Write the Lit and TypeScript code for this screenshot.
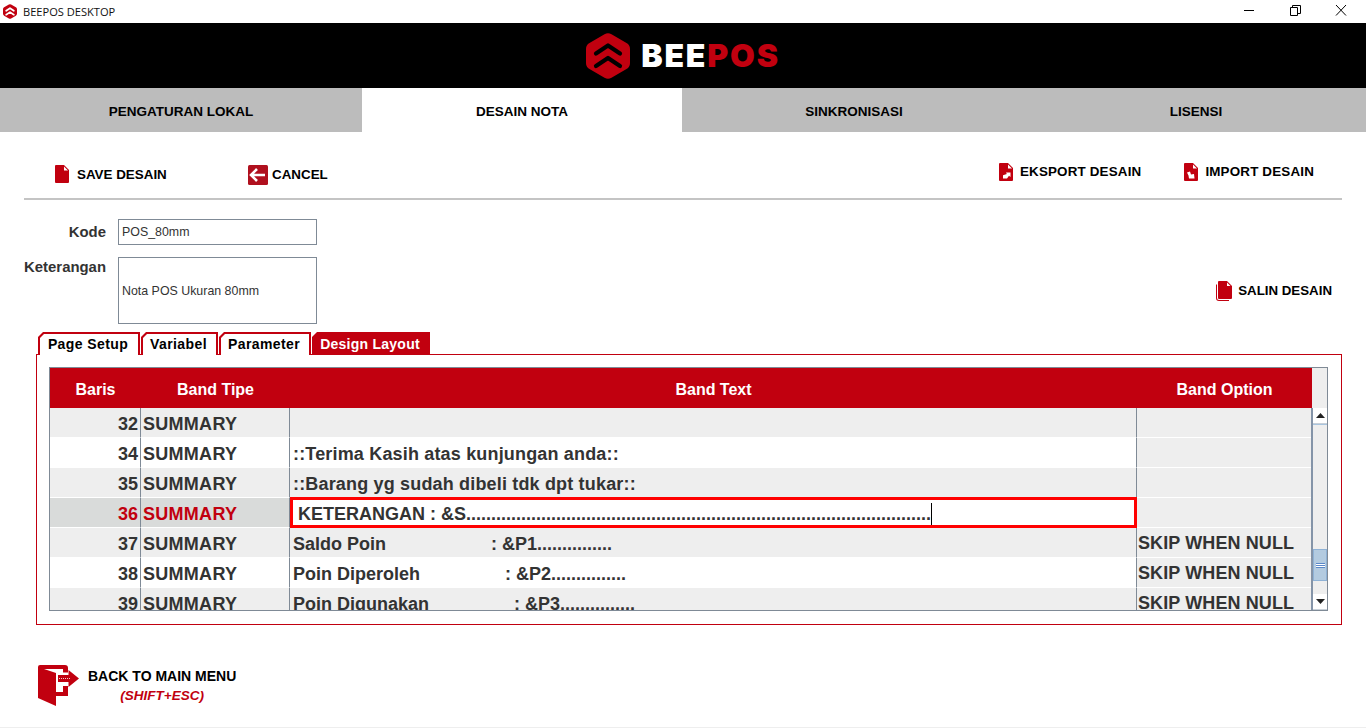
import { LitElement, html, css, svg } from "lit";
import { customElement } from "lit/decorators.js";

const RED = "#c1000f";
const REDC = css`#c1000f`;
const HEX = "M18.500 1.200a7 7 0 0 1 7 0L40.500 10a7 7 0 0 1 3.500 6V30a7 7 0 0 1-3.500 6L25.500 44.800a7 7 0 0 1-7 0L3.500 36A7 7 0 0 1 0 30V16A7 7 0 0 1 3.500 10Z";
const doc = (inner = svg``) => html`<svg class="ic" width="14" height="18" viewBox="0 0 14 18"><path fill="${RED}" d="M1 0H9L14 5V17a1 1 0 0 1-1 1H1a1 1 0 0 1-1-1V1a1 1 0 0 1 1-1Z"/><path fill="#fff" d="M9 1.500 13 5.500H9Z"/>${inner}</svg>`;
const hex = (w: number, h: number, stroke: string, sw: number) => html`<svg width="${w}" height="${h}" viewBox="0 0 44 46"><path fill="${RED}" d="${HEX}"/><path fill="none" stroke="${stroke}" stroke-width="${sw}" stroke-linejoin="round" stroke-linecap="round" d="M10 20.500 22 12.500 34 20.500"/><path fill="none" stroke="${stroke}" stroke-width="${sw}" stroke-linejoin="round" stroke-linecap="round" d="M10 33 22 25 34 33"/></svg>`;

const rows = [
  ["32", "", "", false],
  ["34", "::Terima Kasih atas kunjungan anda::", "", false],
  ["35", "::Barang yg sudah dibeli tdk dpt tukar::", "", false],
  ["36", "KETERANGAN : &S" + ".".repeat(93), "", true],
  ["37", "Saldo Poin" + " ".repeat(21) + ": &P1" + ".".repeat(15), "SKIP WHEN NULL", false],
  ["38", "Poin Diperoleh" + " ".repeat(17) + ": &P2" + ".".repeat(15), "SKIP WHEN NULL", false],
  ["39", "Poin Digunakan" + " ".repeat(17) + ": &P3" + ".".repeat(15), "SKIP WHEN NULL", false],
] as [string, string, string, boolean][];

@customElement("app-root")
export class AppRoot extends LitElement {
  static styles = css`
    :host { display: block; width: 1366px; height: 728px; overflow: hidden; background: #fff; font-family: "Liberation Sans", Arial, sans-serif; color: #000; box-sizing: border-box; border-bottom: 1px solid #eee; }
    * { box-sizing: border-box; }
    .titlebar { height: 23px; display: flex; align-items: center; padding-left: 3px; }
    .titlebar .name { font: 11.100px "Open Sans", sans-serif; margin-left: 6px; color: #111; }
    .win { margin-left: auto; margin-right: 2px; display: flex; }
    .win svg { display: block; width: 46px; height: 23px; }
    .banner { height: 65px; background: #000; display: flex; align-items: center; justify-content: center; gap: 11px; padding-top: 1px; }
    .brand { font: 900 32px/1 Inter, "Liberation Sans", sans-serif; letter-spacing: 1.800px; color: #fff; }
    .brand b { color: ${REDC}; font-weight: 900; }
    .nav { display: grid; grid-template-columns: 362px 320px 344px 340px; height: 44px; background: #bcbcbc; }
    .nav div { display: flex; align-items: center; justify-content: center; font-size: 13.500px; font-weight: 700; padding-top: 2px; }
    .nav .on { background: #fff; }
    .toolbar { height: 68px; margin: 0 24px; border-bottom: 2px solid #c4c4c4; display: flex; align-items: center; padding: 18px 28px 0 31px; }
    .tb { display: flex; align-items: center; font-size: 13.400px; font-weight: 700; }
    .save { gap: 8px; width: 193px; }
    .cancel { gap: 4px; margin-top: 1px; }
    .right { margin-left: auto; display: flex; gap: 43px; margin-top: -5px; }
    .right .tb { gap: 7px; letter-spacing: 0.170px; }
    .ic { display: block; }
    .form { padding-top: 19px; display: grid; grid-template-columns: 82px 199px 1fr; column-gap: 12px; row-gap: 12px; margin-left: 24px; }
    label { font-size: 14.900px; font-weight: 700; color: #333; text-align: right; white-space: nowrap; }
    .l1 { padding-top: 5px; }
    .l2 { padding-top: 2px; }
    .field { border: 1px solid #7f8a96; font-size: 12.400px; color: #333; padding-left: 3px; display: flex; align-items: center; }
    .f1 { height: 26px; }
    .f2 { height: 67px; }
    .salin { justify-self: end; align-self: center; gap: 6px; margin-right: 34px; font-size: 13.300px; }
    .tabs { display: grid; grid-template-columns: 102px 77px 92px 118px; gap: 1px; margin: 8px 0 0 38px; height: 23px; position: relative; z-index: 1; }
    .tab { background: ${REDC}; padding: 2px 2px 0; clip-path: polygon(5px 0, 100% 0, 100% 100%, 0 100%, 0 5px); font-size: 14px; font-weight: 700; letter-spacing: 0.400px; }
    .tab span { display: flex; align-items: center; justify-content: center; height: 100%; background: #fff; padding: 0 2px 2px 0; clip-path: polygon(4px 0, 100% 0, 100% 100%, 0 100%, 0 4px); }
    .tab.on { color: #fff; letter-spacing: 0.250px; }
    .tab.on span { background: ${REDC}; }
    .panel { margin: -1px 24px 0 36px; height: 271px; border: 1px solid ${REDC}; padding: 12px 13px 13px 12px; }
    .table { height: 244px; border: 1px solid #7f8a96; display: grid; grid-template-rows: 40px 1fr; overflow: hidden; }
    .head { display: grid; grid-template-columns: 91px 149px 847px 175px 1fr; background: #eee; }
    .head div { background: ${REDC}; color: #fff; font-size: 16px; font-weight: 700; display: flex; align-items: center; justify-content: center; padding-top: 4px; }
    .head .corner { background: #eee; }
    .body { display: grid; grid-template-columns: 1fr 16px; min-height: 0; }
    .rows { overflow: hidden; }
    .row { display: grid; grid-template-columns: 91px 149px 847px 174px; height: 30px; background: #eee; font-size: 18px; font-weight: 700; color: #333; }
    .row:nth-child(even) { background: #fff; }
    .row.sel { background: #d9dbda; color: ${REDC}; }
    .row > div { border-bottom: 1px solid #fff; line-height: 33px; white-space: pre; overflow: hidden; }
    .row .n { text-align: right; padding-right: 2px; border-right: 1px solid #7f8a96; }
    .row .t { padding-left: 2px; letter-spacing: 0.280px; border-right: 1px solid #7f8a96; }
    .row .x { padding-left: 3px; border-right: 1px solid #7f8a96; }
    .row .x.wide { letter-spacing: 0.170px; }
    .row .o { padding-left: 1px; line-height: 31px; letter-spacing: 0.100px; }
    .row:nth-child(even) .o { background: #eee; }
    .row .edit { margin: -1px 0 0; height: 31px; border: 3px solid #f00; background: #fff; color: #333; padding-left: 5px; line-height: 29px; }
    .caret { border-right: 1px solid #000; display: inline-block; line-height: 22px; }
    .sb { border-left: 2px solid #8494a8; background: #eee; display: flex; flex-direction: column; }
    .btn { height: 16px; background: #fff; border-bottom: 1px solid #c8d0d8; display: flex; align-items: center; justify-content: center; flex: none; }
    .track { flex: none; height: 125px; border-top: 1px solid #a8c4de; }
    .thumb { flex: none; height: 32px; background: #b3cbe0; border: 1px solid #8fb2d6; display: flex; align-items: center; justify-content: center; }
    .thumb i { display: block; width: 9px; height: 5px; border-top: 1px solid #5a88c8; border-bottom: 1px solid #5a88c8; background: linear-gradient(#fff 0 33%, #5a88c8 33% 66%, #fff 66%); }
    .gap { flex: 1; }
    .back { display: flex; margin: 40px 0 0 38px; gap: 9px; }
    .back .txt { padding-top: 3px; text-align: center; }
    .back .a { font-size: 14px; font-weight: 700; line-height: 16px; }
    .back .b { font-size: 13.500px; font-weight: 700; font-style: italic; color: ${REDC}; line-height: 16px; margin-top: 4px; }
  `;

  render() {
    return html`
      <div class="titlebar">
        ${hex(14, 15, "#fff", 5.500)}
        <span class="name">BEEPOS DESKTOP</span>
        <div class="win">
          <svg viewBox="0 0 46 23"><path d="M18 10.500H28" stroke="#000"/></svg>
          <svg viewBox="0 0 46 23" fill="none" stroke="#000"><path d="M18.500 7.500h7v8h-7Z"/><path d="M20.500 7.500v-2h8v8h-3"/></svg>
          <svg viewBox="0 0 46 23" stroke="#000"><path d="M18 5 28 15.500M28 5 18 15.500"/></svg>
        </div>
      </div>
      <div class="banner">${hex(44, 46, "#000", 4.200)}<div class="brand">BEE<b>POS</b></div></div>
      <div class="nav">
        <div>PENGATURAN LOKAL</div><div class="on">DESAIN NOTA</div><div>SINKRONISASI</div><div>LISENSI</div>
      </div>
      <div class="toolbar">
        <div class="tb save">${doc()}<span>SAVE DESAIN</span></div>
        <div class="tb cancel">
          <svg class="ic" width="20" height="20" viewBox="0 0 20 20"><rect width="20" height="20" rx="1.500" fill="#b0101e"/><path d="M9 4 3 10l6 6M3.500 10H17" fill="none" stroke="#fff" stroke-width="2.600"/></svg>
          <span>CANCEL</span>
        </div>
        <div class="right">
          <div class="tb">${doc(svg`<path fill="#fff" d="M7 9.500h4.500V14L10 12.800 8 15.500H4v-3.300L7.800 11Z"/>`)}<span>EKSPORT DESAIN</span></div>
          <div class="tb">${doc(svg`<path fill="#fff" d="M3 9.500 6 8.500l1 3 3-.5 .5 4.500H5l-.5-3Z"/>`)}<span>IMPORT DESAIN</span></div>
        </div>
      </div>
      <div class="form">
        <label class="l1">Kode</label><div class="field f1">POS_80mm</div><div></div>
        <label class="l2">Keterangan</label><div class="field f2">Nota POS Ukuran 80mm</div>
        <div class="tb salin">
          <svg class="ic" width="17" height="20" viewBox="0 0 17 20"><path fill="${RED}" d="M1 3.500V17a3 3 0 0 0 3 3h10v-1H4a2 2 0 0 1-2-2V3.500Z"/><path fill="${RED}" d="M4 0h8l5 5v12a1 1 0 0 1-1 1H4a1 1 0 0 1-1-1V1a1 1 0 0 1 1-1Z"/><path fill="#fff" d="M12 1.500 15.500 5H12Z"/></svg>
          <span>SALIN DESAIN</span>
        </div>
      </div>
      <div class="tabs">
        <div class="tab"><span>Page Setup</span></div>
        <div class="tab"><span>Variabel</span></div>
        <div class="tab"><span>Parameter</span></div>
        <div class="tab on"><span>Design Layout</span></div>
      </div>
      <div class="panel">
        <div class="table">
          <div class="head"><div>Baris</div><div>Band Tipe</div><div>Band Text</div><div>Band Option</div><div class="corner"></div></div>
          <div class="body">
            <div class="rows">
              ${rows.map(([n, t, o, sel]) => html`
                <div class="row ${sel ? "sel" : ""}">
                  <div class="n">${n}</div><div class="t">SUMMARY</div>
                  ${sel ? html`<div class="edit"><span class="caret">${t}</span></div>` : html`<div class="x ${t.startsWith("::") ? "wide" : ""}">${t}</div>`}
                  <div class="o">${o}</div>
                </div>`)}
            </div>
            <div class="sb">
              <div class="btn"><svg width="9" height="5" viewBox="0 0 9 5"><path d="M4.500 0 9 5H0Z" fill="#222"/></svg></div>
              <div class="track"></div>
              <div class="thumb"><i></i></div>
              <div class="gap"></div>
              <div class="btn"><svg width="9" height="5" viewBox="0 0 9 5"><path d="M0 0H9L4.500 5Z" fill="#222"/></svg></div>
            </div>
          </div>
        </div>
      </div>
      <div class="back">
        <svg class="ic" width="41" height="41" viewBox="0 0 41 41">
          <path fill="${RED}" d="M2 0H27a3 3 0 0 1 3 3V31H18V27H25V4H6L18 8V41L0 33V2a2 2 0 0 1 2-2Z"/>
          <path fill="#fff" d="M24 7.500h7V21h-7Z"/>
          <path fill="${RED}" d="M20 10h10.500V5L41 13.500 30.500 22V17H20Z"/>
          <path stroke="#f3c8cc" stroke-dasharray="1 1" d="M21 13.500H33"/>
        </svg>
        <div class="txt"><div class="a">BACK TO MAIN MENU</div><div class="b">(SHIFT+ESC)</div></div>
      </div>
    `;
  }
}
